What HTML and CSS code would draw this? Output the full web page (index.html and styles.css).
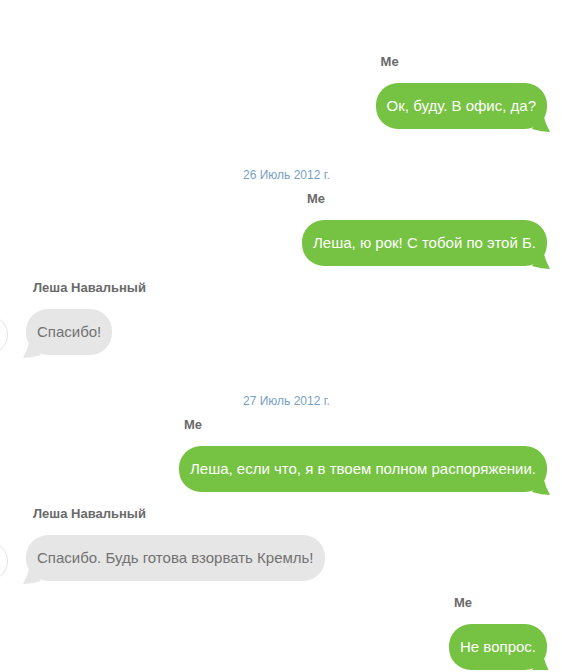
FILE: index.html
```html
<!DOCTYPE html>
<html lang="ru">
<head>
    <meta charset="UTF-8">
    <meta name="viewport" content="width=device-width, initial-scale=1.0">
    <title>Messages</title>
    <link rel="stylesheet" href="styles.css">
</head>
<body>
    <div class="chat">
        <div class="msg out">
            <div class="author">Me</div>
            <div class="bubble">Ок, буду. В офис, да?</div>
        </div>

        <div class="date">26 Июль 2012 г.</div>

        <div class="msg out">
            <div class="author">Me</div>
            <div class="bubble">Леша, ю рок! С тобой по этой Б.</div>
        </div>

        <div class="msg in">
            <div class="author">Леша Навальный</div>
            <div class="bubble-row">
                <div class="avatar"></div>
                <div class="bubble">Спасибо!</div>
            </div>
        </div>

        <div class="date">27 Июль 2012 г.</div>

        <div class="msg out">
            <div class="author">Me</div>
            <div class="bubble">Леша, если что, я в твоем полном распоряжении.</div>
        </div>

        <div class="msg in">
            <div class="author">Леша Навальный</div>
            <div class="bubble-row">
                <div class="avatar"></div>
                <div class="bubble">Спасибо. Будь готова взорвать Кремль!</div>
            </div>
        </div>

        <div class="msg out">
            <div class="author">Me</div>
            <div class="bubble">Не вопрос.</div>
        </div>
    </div>
</body>
</html>
```

FILE: styles.css
```css
body {
    margin: 0;
    padding: 0;
    background: #fff;
    font-family: "Liberation Sans", Arial, sans-serif;
    overflow: hidden;
}

.chat {
    display: flex;
    flex-direction: column;
    padding: 55px 15px 0 26px;
}

.msg {
    margin-top: 15px;
}

.msg:first-child,
.date + .msg {
    margin-top: 0;
}

.msg.out {
    align-self: flex-end;
}

.msg.in {
    align-self: flex-start;
}

.author {
    font-size: 13px;
    line-height: 14px;
    font-weight: bold;
    color: #6a6a6a;
    margin-bottom: 14px;
    padding-left: 5px;
}

.msg.in .author {
    padding-left: 7px;
}

.bubble {
    position: relative;
    font-size: 15px;
    line-height: 20px;
    padding: 13px 11px;
    border-radius: 22px;
    white-space: nowrap;
}

.msg.out .bubble {
    background: #76c242;
    color: #fff;
}

.msg.in .bubble {
    background: #e6e6e6;
    color: #727272;
}

/* tails */
.bubble::after {
    content: "";
    position: absolute;
    bottom: -3px;
    width: 19px;
    height: 18px;
}

.msg.out .bubble::after {
    right: -3px;
    background: #76c242;
    clip-path: polygon(5% 83%, 63% 0, 80% 55%, 100% 100%, 55% 96%);
}

.msg.in .bubble::after {
    left: -3px;
    background: #e6e6e6;
    clip-path: polygon(95% 83%, 37% 0, 20% 55%, 0 100%, 45% 96%);
}

.bubble-row {
    display: flex;
    align-items: flex-end;
    margin-left: -58px;
}

.avatar {
    width: 38px;
    height: 38px;
    border: 1px solid #e3e3e3;
    border-radius: 50%;
    background: #fff;
    margin-right: 18px;
    flex-shrink: 0;
}

.date {
    align-self: center;
    font-size: 12px;
    line-height: 14px;
    color: #77a0c6;
    margin: 39px 0 10px;
}
```
